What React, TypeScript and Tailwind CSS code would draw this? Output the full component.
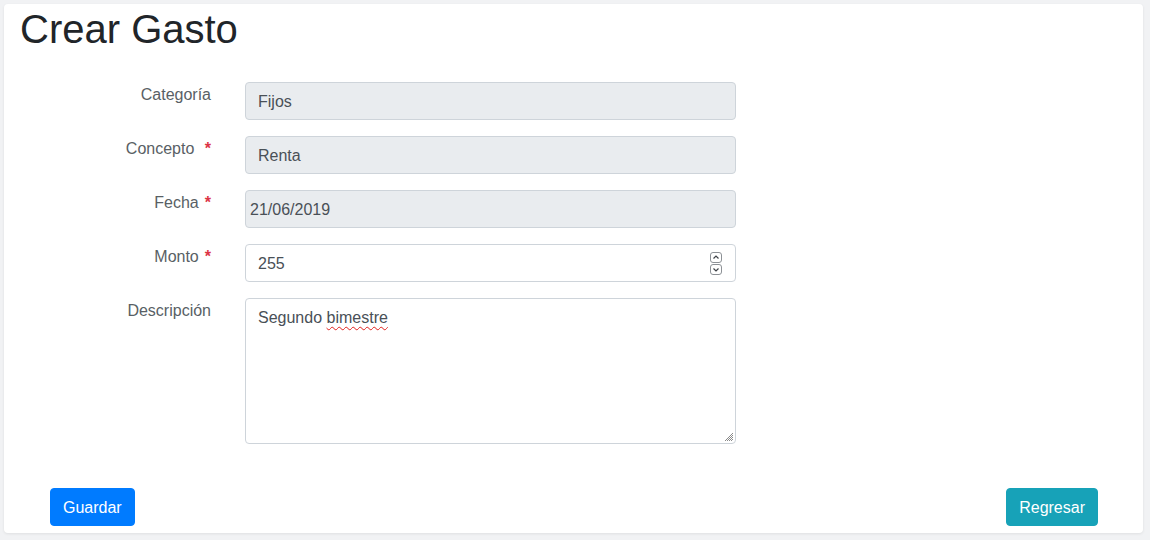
import React from 'react';

const font = { fontFamily: '"Liberation Sans", Arial, sans-serif' };

function Req() {
  return <span className="font-bold text-[#dc3545] ml-[6px]">*</span>;
}

function Label({ children }: { children: React.ReactNode }) {
  return (
    <div className="w-[207px] shrink-0 text-right text-[16px] leading-6 pt-px text-[#595f65] whitespace-pre">
      {children}
    </div>
  );
}

function Spinner() {
  return (
    <div className="flex flex-col gap-px mr-[13px] -mt-[2px]">
      <svg width="12" height="11" viewBox="0 0 12 11">
        <rect x="0.5" y="0.5" width="11" height="10" rx="2.5" fill="#fff" stroke="#8d9196" />
        <path d="M3.5 6.5 L6 4 L8.5 6.5" fill="none" stroke="#3d4146" strokeWidth="1.2" />
      </svg>
      <svg width="12" height="11" viewBox="0 0 12 11">
        <rect x="0.5" y="0.5" width="11" height="10" rx="2.5" fill="#fff" stroke="#8d9196" />
        <path d="M3.5 4.5 L6 7 L8.5 4.5" fill="none" stroke="#3d4146" strokeWidth="1.2" />
      </svg>
    </div>
  );
}

function Grip() {
  return (
    <svg className="absolute right-[2px] bottom-[2px]" width="9" height="9" viewBox="0 0 9 9">
      <path d="M9 1 L1 9 M9 3 L3 9 M9 5 L5 9 M9 7 L7 9" stroke="#8a8a8a" strokeWidth="1" />
    </svg>
  );
}

export default function App() {
  return (
    <div className="min-h-screen bg-[#f1f2f4] pt-1 pl-1 pr-[7px] pb-[7px]" style={font}>
      <div className="h-[529px] bg-white rounded shadow-[0_1px_3px_rgba(0,0,0,0.08)] flex flex-col">
        <h1 className="pt-[5px] pl-4 text-[40px] leading-none text-[#212529]">Crear Gasto</h1>

        <div className="mt-[33px] flex flex-col gap-4">
          <div className="flex items-start">
            <Label>Categoría</Label>
            <div className="ml-[34px] w-[491px] h-[38px] border border-[#ced4da] rounded bg-[#e9ecef] px-3 pt-[2px] flex items-center text-[16px] text-[#495057]">
              Fijos
            </div>
          </div>

          <div className="flex items-start">
            <Label>
              Concepto <Req />
            </Label>
            <div className="ml-[34px] w-[491px] h-[38px] border border-[#ced4da] rounded bg-[#e9ecef] px-3 pt-[2px] flex items-center text-[16px] text-[#495057]">
              Renta
            </div>
          </div>

          <div className="flex items-start">
            <Label>
              Fecha<Req />
            </Label>
            <div className="ml-[34px] w-[491px] h-[38px] border border-[#ced4da] rounded bg-[#e9ecef] pl-[4px] pt-[2px] flex items-center text-[16px] text-[#495057]">
              21/06/2019
            </div>
          </div>

          <div className="flex items-start">
            <Label>
              Monto<Req />
            </Label>
            <div className="ml-[34px] w-[491px] h-[38px] border border-[#ced4da] rounded bg-white pl-3 pt-[2px] flex items-center justify-between text-[16px] text-[#495057]">
              <span>255</span>
              <Spinner />
            </div>
          </div>

          <div className="flex items-start">
            <Label>Descripción</Label>
            <div className="relative ml-[34px] w-[491px] h-[146px] border border-[#ced4da] rounded bg-white px-3 pt-[7px] text-[16px] leading-6 text-[#495057]">
              Segundo{' '}
              <span className="underline decoration-wavy decoration-[#e0201c] decoration-1 underline-offset-[3px]">
                bimestre
              </span>
              <Grip />
            </div>
          </div>
        </div>

        <div className="mt-[44px] flex justify-between pl-[46px] pr-[45px]">
          <button className="h-[38px] px-3 pt-px rounded bg-[#007bff] border border-[#007bff] text-white text-[16px] leading-6">
            Guardar
          </button>
          <button className="h-[38px] px-3 pt-px rounded bg-[#17a2b8] border border-[#17a2b8] text-white text-[16px] leading-6">
            Regresar
          </button>
        </div>
      </div>
    </div>
  );
}
